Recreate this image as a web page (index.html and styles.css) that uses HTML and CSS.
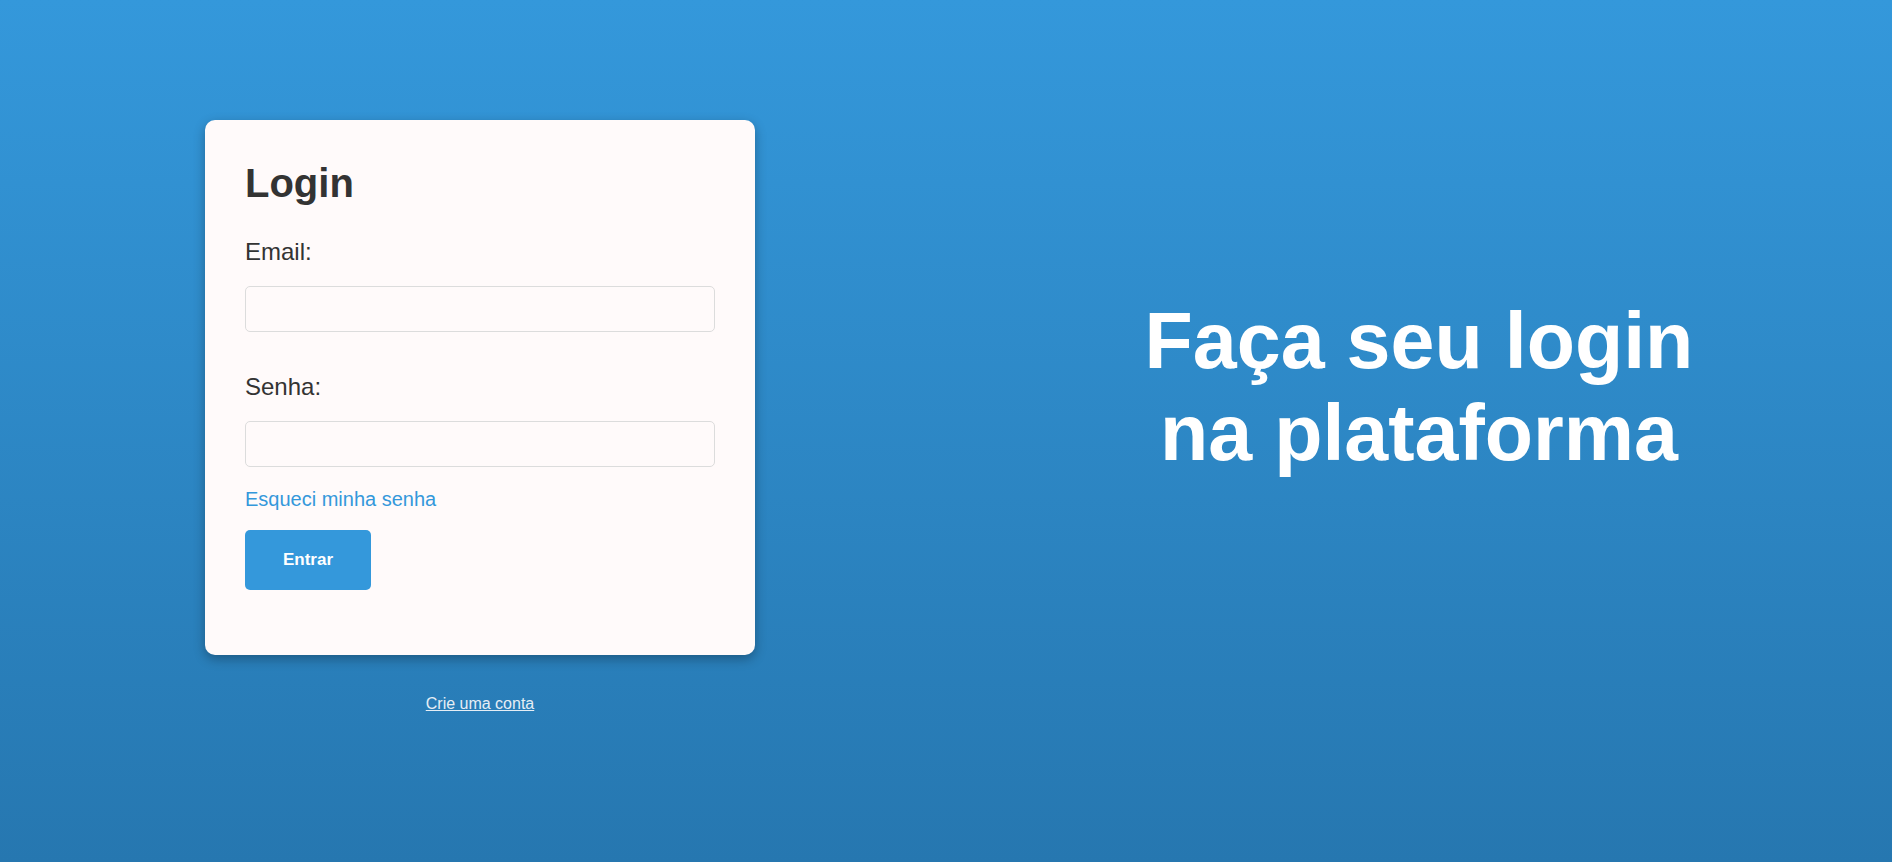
FILE: index.html
```html
<!DOCTYPE html>
<html lang="pt-BR">
<head>
<meta charset="utf-8">
<title>Login</title>
<link rel="stylesheet" href="styles.css">
</head>
<body>
<main class="page">
  <section class="login-col">
    <div class="card">
      <h1 class="card-title">Login</h1>
      <form class="form">
        <label class="label" for="email">Email:</label>
        <input class="input" id="email" type="email">
        <label class="label label-second" for="senha">Senha:</label>
        <input class="input" id="senha" type="password">
        <a class="forgot" href="#">Esqueci minha senha</a>
        <button class="btn" type="button">Entrar</button>
      </form>
    </div>
    <a class="create" href="#">Crie uma conta</a>
  </section>
  <section class="hero-col">
    <h2 class="hero">Faça seu login<br>na plataforma</h2>
  </section>
</main>
</body>
</html>
```

FILE: styles.css
```css
html, body {
  margin: 0;
  padding: 0;
  height: 100%;
}

body {
  font-family: "Liberation Sans", Arial, sans-serif;
  background: linear-gradient(to bottom, #3498db 0%, #2677b0 100%);
  min-height: 862px;
  color: #333;
}

.page {
  display: grid;
  grid-template-columns: 1fr 1fr;
  height: 100vh;
  padding-top: 120px;
  box-sizing: border-box;
}

.login-col {
  display: flex;
  flex-direction: column;
  align-items: center;
  padding-left: 14px;
}

.card {
  width: 550px;
  box-sizing: border-box;
  background: #fffafa;
  border-radius: 10px;
  padding: 40px 40px 65px;
  box-shadow: 0 4px 12px rgba(0, 0, 0, 0.3);
}

.card-title {
  margin: 0 0 32px;
  font-size: 40px;
  line-height: 46px;
  font-weight: bold;
  color: #333;
}

.form {
  display: flex;
  flex-direction: column;
  align-items: flex-start;
}

.label {
  font-size: 24px;
  line-height: 28px;
  color: #333;
  margin-bottom: 20px;
}

.label-second {
  margin-top: 41px;
}

.input {
  width: 100%;
  height: 46px;
  box-sizing: border-box;
  border: 1px solid #dcdcdc;
  border-radius: 5px;
  background: #fffafa;
  font-size: 16px;
  padding: 0 12px;
  margin: 0;
}

.forgot {
  margin-top: 21px;
  font-size: 20px;
  line-height: 23px;
  color: #3498db;
  text-decoration: none;
}

.btn {
  margin-top: 19px;
  width: 126px;
  height: 60px;
  border: none;
  border-radius: 5px;
  background: #3498db;
  color: #fff;
  font-family: "Liberation Sans", Arial, sans-serif;
  font-size: 17px;
  font-weight: bold;
  padding: 0;
}

.create {
  margin-top: 40px;
  font-size: 16px;
  line-height: 18px;
  color: #e6eef5;
  text-decoration: underline;
}

.hero-col {
  display: flex;
  justify-content: center;
  padding-top: 175px;
}

.hero {
  margin: 0;
  font-size: 79px;
  line-height: 92px;
  font-weight: bold;
  color: #fff;
  text-align: center;
}
```
